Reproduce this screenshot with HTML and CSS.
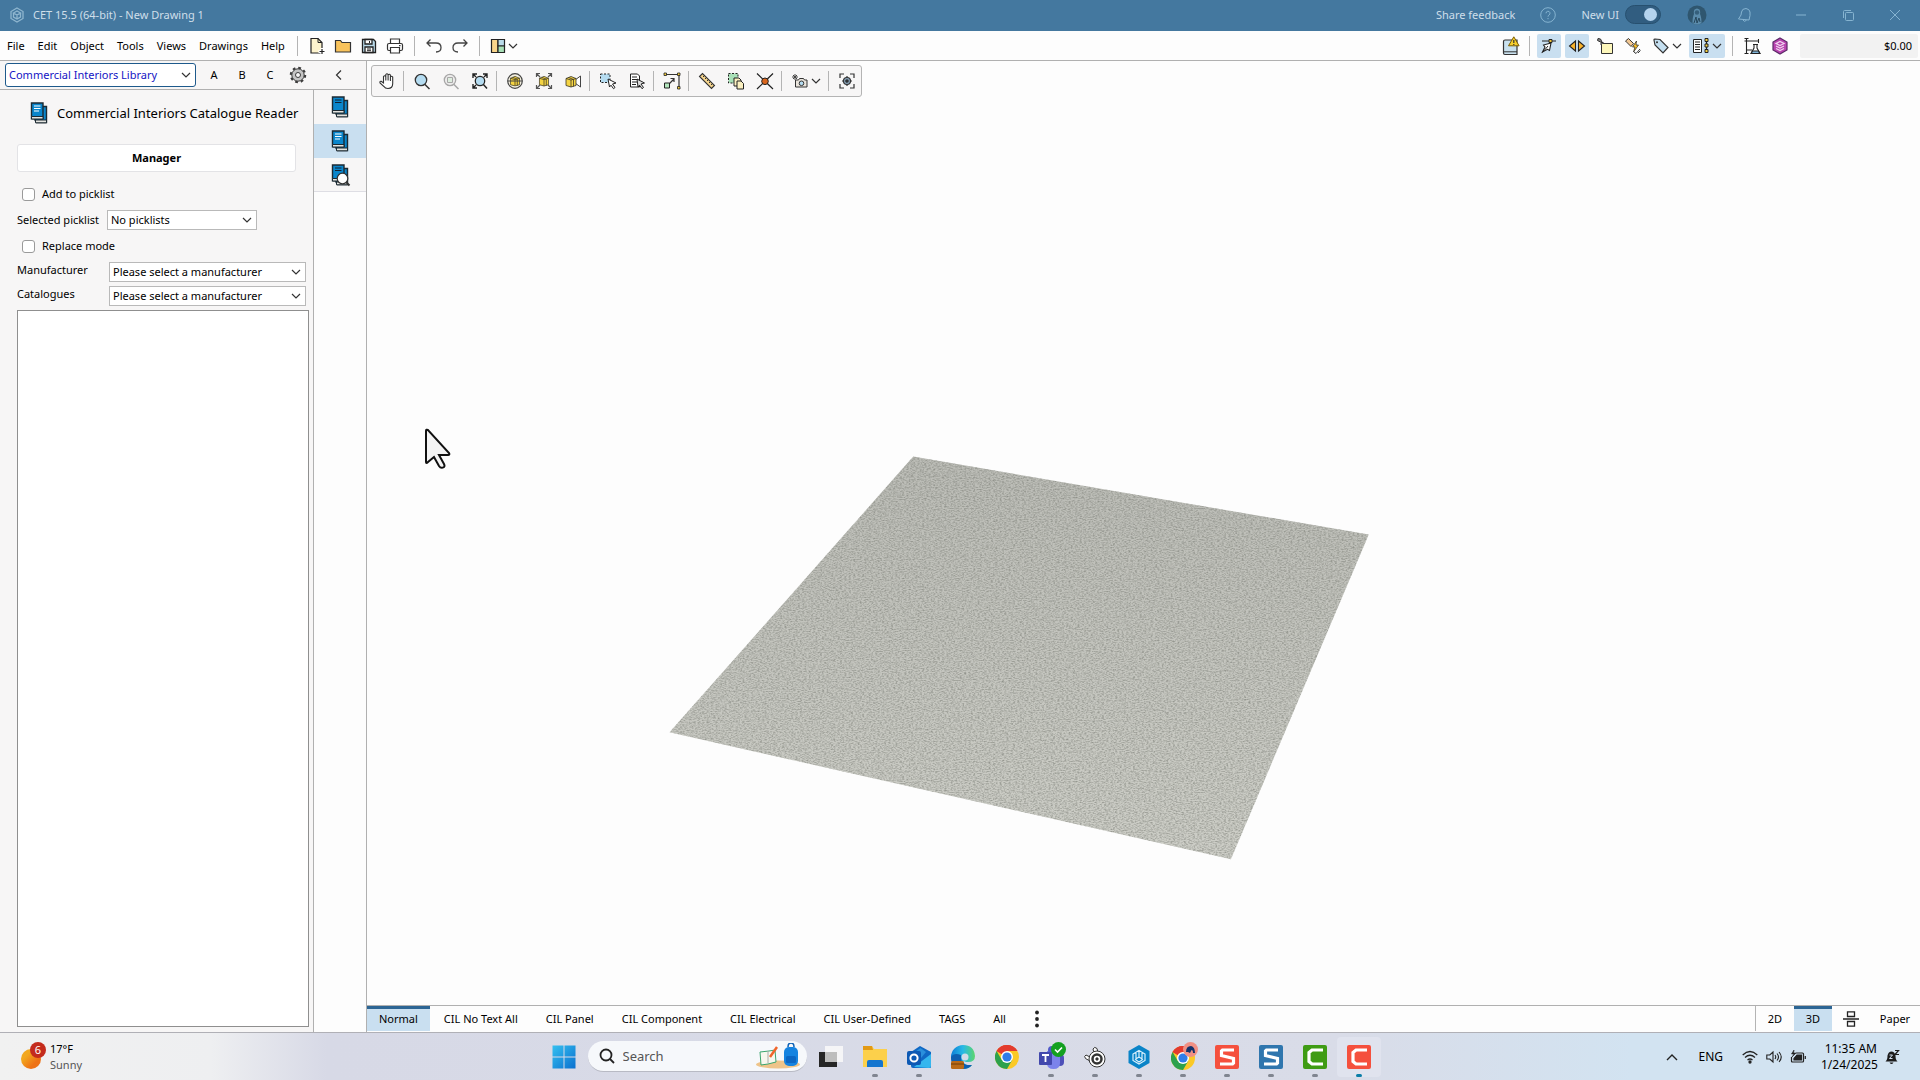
FILE: index.html
```html
<!DOCTYPE html>
<html lang="en">
<head>
<meta charset="utf-8">
<title>CET 15.5 (64-bit) - New Drawing 1</title>
<link rel="stylesheet" href="styles.css">
</head>
<body>
<svg class="defs" width="0" height="0" aria-hidden="true">
  <defs>
    <symbol id="chevron" viewBox="0 0 10 10"><path d="M1 3l4 4 4-4" fill="none" stroke="#333" stroke-width="1.2"/></symbol>
    <symbol id="books" viewBox="0 0 24 24">
      <path d="M8 5.500h11.500v16H9.500L8 19z" fill="#0a86cc" stroke="#1c2a33" stroke-width="1.400"/>
      <path d="M8.500 19h11v2.800h-11z" fill="#e4e4e0" stroke="#1c2a33"/>
      <path d="M4.500 2H16v15.800H4.500z" fill="#0a86cc" stroke="#1c2a33" stroke-width="1.400"/>
      <path d="M4.500 15.500H16V18H4.500z" fill="#e4e4e0" stroke="#1c2a33"/>
    </symbol>
    <symbol id="chrome" viewBox="0 0 24 24">
      <circle cx="12" cy="12" r="12" fill="#fbc926"/>
      <path d="M12 12L1.600 6A12 12 0 0 1 22.400 6H12z" fill="#e33b2e"/>
      <path d="M1.600 6A12 12 0 0 0 12 24l5.200-9L12 12 6.800 15z" fill="#2da14c"/>
      <path d="M1.600 6A12 12 0 0 1 22.400 6H12L6.800 9z" fill="#e33b2e"/>
      <circle cx="12" cy="12" r="6" fill="#fff"/><circle cx="12" cy="12" r="4.600" fill="#2f7de9"/>
    </symbol>
    <symbol id="yellowbox" viewBox="0 0 12 12">
      <path d="M1 3l5-2 5 2v7l-5 1.500L1 10z" fill="#f5d443" stroke="#3a3524" stroke-width=".8"/>
      <path d="M1 3l5 1.500L11 3M6 4.500v7M3.500 2l5 2v7" fill="none" stroke="#3a3524" stroke-width=".8"/>
    </symbol>
    <linearGradient id="floorShade" x1="0" y1="0" x2="0" y2="1"><stop offset="0" stop-color="#bbbcb6"/><stop offset="1" stop-color="#cdcec7"/></linearGradient>
    <linearGradient id="winBlue" x1="0" y1="0" x2="1" y2="1"><stop offset="0" stop-color="#35c0f0"/><stop offset="1" stop-color="#0a70cf"/></linearGradient>
    <linearGradient id="sun" x1="0" y1="0" x2="1" y2="1"><stop offset=".3" stop-color="#f2a71e"/><stop offset=".7" stop-color="#ee7215"/></linearGradient>
    <linearGradient id="edge" x1="0" y1="0" x2="1" y2="0"><stop offset="0" stop-color="#0c7fd6"/><stop offset=".5" stop-color="#29b9e6"/><stop offset="1" stop-color="#5bd66c"/></linearGradient>
    <filter id="carpet" x="0" y="0" width="1" height="1" color-interpolation-filters="sRGB">
      <feTurbulence type="fractalNoise" baseFrequency="0.45 0.900" numOctaves="2" seed="4" result="n"/>
      <feColorMatrix in="n" type="matrix" values="0 0 0 0 .45  0 0 0 0 .46  0 0 0 0 .43  1.200 0 0 0 -.45" result="g"/>
      <feComposite in="g" in2="SourceGraphic" operator="in" result="grain"/>
      <feMerge><feMergeNode in="SourceGraphic"/><feMergeNode in="grain"/></feMerge>
    </filter>
  </defs>
</svg>

<header class="titlebar">
  <svg class="i16" viewBox="0 0 16 16" fill="none" stroke="#8fb6cf" stroke-width="1.300"><path d="M8 1l6 3.500v7L8 15l-6-3.500v-7z"/><path d="M4.500 6L8 4l3.500 2L8 8zM4.500 6v4L8 12l3.500-2V6M8 8v4"/></svg>
  <h1 class="app-title">CET 15.5 (64-bit) - New Drawing 1</h1>
  <div class="title-tools">
    <a class="title-link" href="#feedback">Share feedback</a>
    <button class="title-btn help" aria-label="Help"><svg class="i16" viewBox="0 0 16 16" fill="none" stroke="#86b4d1"><circle cx="8" cy="8" r="7.300"/><path d="M6 6.300a2 2 0 1 1 3 1.700q-1 .7-1 1.700M8 11v1.200"/></svg></button>
    <label class="switch-label">New UI <input class="switch" type="checkbox" role="switch" checked></label>
    <button class="title-btn user" aria-label="Account"><svg class="i20" viewBox="0 0 20 20"><circle cx="10" cy="10" r="9.500" fill="#2f566f"/><path d="M5.500 18q0-6 1.500-9-1-5 3-5.500 4 .5 3 5.500 1.500 3 1.500 9-4.500 3-9 0z" fill="#5a8bab"/><circle cx="10" cy="7.500" r="2.200" fill="#355f7b"/><path d="M7 18l2-6 1 6 2-5 1 4" stroke="#26475c" fill="none"/></svg></button>
    <button class="title-btn bell" aria-label="Notifications"><svg class="i16" viewBox="0 0 16 16" fill="none" stroke="#86b4d1"><path d="M9 1.500q-4 0-4.500 3.500L4 8l-2.500 4 10.500 1 1-4.500L13 5Q12.500 2 9 1.500zM6 13q1 2.500 3.500 .3"/></svg></button>
    <button class="title-btn" aria-label="Minimize"><svg class="i12" viewBox="0 0 12 12"><path d="M1 6h10" stroke="#86b4d1"/></svg></button>
    <button class="title-btn" aria-label="Restore"><svg class="i12" viewBox="0 0 12 12" fill="none" stroke="#86b4d1"><rect x="3.500" y="3.500" width="8" height="8" rx="1"/><path d="M1.500 9V2.500q0-1 1-1H9"/></svg></button>
    <button class="title-btn" aria-label="Close"><svg class="i12" viewBox="0 0 12 12"><path d="M1 1l10 10M11 1L1 11" stroke="#86b4d1"/></svg></button>
  </div>
</header>

<nav class="menubar">
  <div class="menus">
    <button>File</button><button>Edit</button><button>Object</button><button>Tools</button><button>Views</button><button>Drawings</button><button>Help</button>
  </div>
  <div class="quick">
    <span class="sep"></span>
    <button class="tool" aria-label="New"><svg class="i18" viewBox="0 0 18 18"><path d="M3 1.500h7l4 4V16H3z" fill="#fdf3cd" stroke="#222" stroke-width="1.200"/><path d="M10 1.500v4h4" fill="none" stroke="#222"/><path d="M10.500 14.500h7M14 11v7" stroke="#fff" stroke-width="3"/><path d="M11.500 14.500h5M14 12v5" stroke="#222" stroke-width="1.200"/></svg></button>
    <button class="tool" aria-label="Open"><svg class="i18" viewBox="0 0 18 18"><path d="M1.500 3.500h5l1.500 2h8.500V15h-15z" fill="#f8c35c" stroke="#333" stroke-width="1.200"/></svg></button>
    <button class="tool" aria-label="Save"><svg class="i18" viewBox="0 0 18 18" stroke="#222" stroke-width="1.300"><path d="M2.500 2.500h11l2 2v11h-13z" fill="#b9d9e8"/><path d="M5 2.500h7V7H5zM5 10h8v5.500H5z" fill="#fff"/><path d="M9.500 4v2M7 12h4M7 13.700h4" stroke-width="1"/></svg></button>
    <button class="tool" aria-label="Print"><svg class="i18" viewBox="0 0 18 18" stroke="#333" stroke-width="1.200" fill="#fff"><path d="M4.500 2h9v5h-9z"/><rect x="1.500" y="6.500" width="15" height="7" rx="1.500"/><path d="M4.500 10.500h9V16h-9z"/><path d="M13 8.700h1.500" /></svg></button>
    <span class="sep"></span>
    <button class="tool" aria-label="Undo"><svg class="i18" viewBox="0 0 18 18" fill="none" stroke="#444" stroke-width="1.300"><path d="M5.500 2.500L2 6l3.500 3.500M2 6h9q5 0 5 4.500t-5 4.500"/></svg></button>
    <button class="tool" aria-label="Redo"><svg class="i18" viewBox="0 0 18 18" fill="none" stroke="#444" stroke-width="1.300"><path d="M12.500 2.500L16 6l-3.500 3.500M16 6H7q-5 0-5 4.500t5 4.500"/></svg></button>
    <span class="sep"></span>
    <button class="tool wide" aria-label="Layout"><svg class="i16" viewBox="0 0 16 16" stroke="#222" stroke-width="1.200"><path d="M1.500 1.500H8v13H1.500z" fill="#f9d58b"/><path d="M8 1.500h6.500V8H8z" fill="#b9dbe9"/><path d="M8 8h6.500v6.500H8z" fill="#a7dfb6"/></svg><svg class="i10"><use href="#chevron"/></svg></button>
  </div>
  <div class="right-tools">
    <button class="tool" aria-label="Catalogue warnings"><svg class="i20" viewBox="0 0 20 20"><path d="M5 4h12v14.500H5q-1.500 0-1.500-1.500V5.500Q3.500 4 5 4z" fill="#c9e1ef" stroke="#333" stroke-width="1.200"/><path d="M4 15.800h13" stroke="#333"/><path d="M13.800.8l5.300 9H8.500z" fill="#f7cf2d" stroke="#7a5c00"/><path d="M13.800 4v3M13.800 8v1" stroke="#333" stroke-width="1.200"/></svg></button>
    <span class="sep"></span>
    <button class="tool on" aria-label="Snap"><svg class="i18" viewBox="0 0 18 18"><path d="M2 4h14" stroke="#222"/><path d="M2.500 15L5 10l-1.500-2L11 6l-1.500 7.500-2-1.200z" fill="#fff" stroke="#222" stroke-width="1.100"/><path d="M2.500 15.500L8 9" stroke="#222"/><path d="M9 2.500h3v3H9z" fill="#f3c334" stroke="#222"/></svg></button>
    <button class="tool on" aria-label="Direction"><svg class="i18" viewBox="0 0 18 18" fill="#fbb32a" stroke="#222" stroke-width="1.100"><path d="M7.500 4v10L1.500 9zM10.500 4v10l6-5z"/></svg></button>
    <button class="tool" aria-label="Note"><svg class="i18" viewBox="0 0 18 18" stroke="#333"><path d="M5.500 6.500h11v10h-11z" fill="#fdf7bb"/><path d="M5 8V5.500h2.500M4.500 5L1.500 3.500 2 1.500l2.500 .5L6 5z" fill="#888"/></svg></button>
    <button class="tool" aria-label="Quick tools"><svg class="i18" viewBox="0 0 18 18" stroke="#222" stroke-width=".9"><path d="M1.500 4l3-2.500 5 5-2.500 3z" fill="#f2c894"/><path d="M12.500 4L8.500 10H11l-1.500 5 5-7H12z" fill="#fbc02a" stroke-width=".7"/><path d="M10 15l2 1.500 4-4.500M14 16l2.500-2.500" fill="none"/></svg></button>
    <button class="tool wide" aria-label="Tag"><svg class="i18" viewBox="0 0 18 18"><path d="M2 3q0-1 1-1l5 .5 8 8-5 5.500-8-8z" fill="#c4dff0" stroke="#333" stroke-width="1.200"/><circle cx="5" cy="5.300" r="1" fill="#333"/></svg><svg class="i10"><use href="#chevron"/></svg></button>
    <button class="tool wide on" aria-label="List"><svg class="i18" viewBox="0 0 18 18" stroke="#222"><path d="M1.500 2.500h8v13h-8z" fill="#fff"/><path d="M3 5h5M3 7.500h5M3 10h5M3 12.500h5M14.500 3v12" fill="none" stroke-width="1.200"/><path d="M13 1.500h3v3h-3zM13 7h3v3h-3zM13 12.500h3v3h-3z" fill="#f6cf3c"/></svg><svg class="i10"><use href="#chevron"/></svg></button>
    <span class="sep"></span>
    <button class="tool" aria-label="Lab"><svg class="i18" viewBox="0 0 18 18" fill="none" stroke="#222" stroke-width="1.100"><path d="M3.500 1.500v15M1.500 4h14M3 13h6M1.500 1.500h4M15.500 2v4M1.500 16.500h4"/><path d="M10 7.500h5M11 7.500V11l-3 5.500h9L14 11V7.500" fill="#fff"/><path d="M9.500 14h6l1.200 2.500H8.300z" fill="#7fb4d8"/></svg></button>
    <button class="tool" aria-label="Modules"><svg class="i18" viewBox="0 0 18 18"><path d="M9 1l7 4v8l-7 4-7-4V5z" fill="#b944b0" stroke="#5b2a68" stroke-width="1.200"/><path d="M5 6.500L9 4.500l4 2-4 2zM5 9l4 2 4-2M5 11.500l4 2 4-2" fill="none" stroke="#f0d5ef" stroke-width="1.200"/></svg></button>
    <output class="price">$0.00</output>
  </div>
</nav>

<main class="workspace">
  <aside class="side">
    <div class="library-row">
      <div class="combo library"><select aria-label="Library"><option>Commercial Interiors Library</option></select><svg class="i10"><use href="#chevron"/></svg></div>
      <button class="key">A</button><button class="key">B</button><button class="key">C</button>
      <button class="key" aria-label="Settings"><svg class="i18" viewBox="0 0 18 18"><circle cx="9" cy="9" r="7" fill="none" stroke="#3c3c3c" stroke-width="2.500" stroke-dasharray="2.700 2.800"/><circle cx="9" cy="9" r="6.200" fill="#c4c4c4" stroke="#3c3c3c"/><circle cx="9" cy="9" r="2.500" fill="#f7f6f6" stroke="#3c3c3c"/></svg></button>
      <button class="key collapse" aria-label="Collapse"><svg class="i10" viewBox="0 0 10 10"><path d="M7 0.500L2.500 5 7 9.500" fill="none" stroke="#333" stroke-width="1.200"/></svg></button>
    </div>
    <div class="side-body">
      <form class="reader">
        <h2 class="reader-title"><svg class="i24" viewBox="0 0 24 24"><use href="#books"/><path d="M7 5h6.500M7 7.500h6.500M7 10h5" stroke="#fff" stroke-width="1.200"/></svg>Commercial Interiors Catalogue Reader</h2>
        <button class="manager" type="button">Manager</button>
        <label class="check"><input type="checkbox">Add to picklist</label>
        <div class="picklist"><label for="pick">Selected picklist</label><div class="combo"><select id="pick"><option>No picklists</option></select><svg class="i10"><use href="#chevron"/></svg></div></div>
        <label class="check"><input type="checkbox">Replace mode</label>
        <div class="field"><label for="maker">Manufacturer</label><div class="combo"><select id="maker"><option>Please select a manufacturer</option></select><svg class="i10"><use href="#chevron"/></svg></div></div>
        <div class="field"><label for="cat">Catalogues</label><div class="combo"><select id="cat"><option>Please select a manufacturer</option></select><svg class="i10"><use href="#chevron"/></svg></div></div>
        <div class="catalogue-list"></div>
      </form>
      <div class="strip">
        <button aria-label="Catalogue"><svg class="i24" viewBox="0 0 24 24"><use href="#books"/><path d="M7 5h6.500M7 7.500h6.500" stroke="#123" stroke-width="1.200"/></svg></button>
        <button class="on" aria-label="Catalogue reader"><svg class="i24" viewBox="0 0 24 24"><use href="#books"/><path d="M7 5h6.500M7 7.500h6.500M7 10h5" stroke="#fff" stroke-width="1.200"/></svg></button>
        <button aria-label="Catalogue search"><svg class="i24" viewBox="0 0 24 24"><use href="#books"/><path d="M7 5h6.500M7 7.500h6.500" stroke="#123" stroke-width="1.200"/><path d="M18 19l3.500 3.500" stroke="#333" stroke-width="2"/><circle cx="14.500" cy="15.500" r="5.300" fill="#fff" stroke="#333" stroke-width="1.200"/></svg></button>
      </div>
    </div>
  </aside>

  <section class="drawing">
    <div class="viewport">
      <svg class="scene" viewBox="367 61 1553 945" aria-label="3D floor">
        <path d="M913 457L1369 535 1231 860 669 733z" fill="url(#floorShade)" filter="url(#carpet)"/>
      </svg>
      <svg class="cursor" viewBox="0 0 28 42"><path d="M2 3v31q0 2 2 0l6-5 5 9q2 3 5 1 1-1 0-3l-5-9h9q2 0 1-2L4 2Q2 1 2 3z" fill="#f4f4f4" stroke="#111" stroke-width="2"/></svg>
      <div class="viewbar">
        <button aria-label="Pan"><svg class="i18" viewBox="0 0 18 18"><path d="M5.500 11V4.500q1.200-1.500 2.300 0V8.500 2.500q1.200-1.500 2.300 0v6-5.500q1.200-1.500 2.300 0V9 5q1.200-1.500 2.300 0v6.500q0 5-4.700 5-3 0-4-2L2 11q-.5-2 1.200-1.700z" fill="#fff" stroke="#333" stroke-width="1.100"/></svg></button>
        <span class="sep"></span>
        <button aria-label="Zoom"><svg class="i18" viewBox="0 0 18 18"><path d="M11.500 12l5 5" stroke="#333" stroke-width="1.500"/><circle cx="8" cy="8" r="5.700" fill="#b5dcf1" stroke="#333" stroke-width="1.300"/></svg></button>
        <button aria-label="Zoom selection"><svg class="i18" viewBox="0 0 18 18" opacity=".4"><path d="M11.500 12l5 5" stroke="#333" stroke-width="1.500"/><circle cx="8" cy="8" r="5.700" fill="#ddd" stroke="#333" stroke-width="1.300"/><path d="M5.500 5.500h5v5h-5z" fill="#b9e0be" stroke="#333"/></svg></button>
        <button aria-label="Zoom extents"><svg class="i18" viewBox="0 0 18 18" stroke="#222" fill="none"><path d="M2 6V2h4M12 2h4v4M2 12v4h4M2 2l3 3M16 2l-3 3M2 16l3-3" stroke-width="1.400"/><path d="M12 12l4 4.500" stroke-width="1.500"/><circle cx="9" cy="9" r="4.700" fill="#b5dcf1" stroke-width="1.300"/></svg></button>
        <span class="sep"></span>
        <button aria-label="Orbit"><svg class="i18" viewBox="0 0 18 18"><circle cx="9" cy="9" r="7.300" fill="#f4f0e0" stroke="#444" stroke-width="1.200"/><use href="#yellowbox" x="3.500" y="3.500" width="11" height="11"/><path d="M2 9h14" stroke="#444"/></svg></button>
        <button aria-label="Fit objects"><svg class="i18" viewBox="0 0 18 18"><path d="M1.500 5V1.500H5M13 1.500h3.500V5M1.500 13v3.500H5M13 16.500h3.500V13M2 2l3 3M16 2l-3 3M2 16l3-3M16 16l-3-3" fill="none" stroke="#555" stroke-width="1.200"/><use href="#yellowbox" x="3.500" y="3" width="11" height="12"/></svg></button>
        <button aria-label="Camera box"><svg class="i18" viewBox="0 0 18 18"><path d="M11 8l5.500-4v11L11 11" fill="#fff" stroke="#444"/><use href="#yellowbox" x="1" y="3" width="12" height="13"/></svg></button>
        <span class="sep"></span>
        <button aria-label="Area select"><svg class="i18" viewBox="0 0 18 18"><path d="M1.500 2h9.500v8.500H1.500z" fill="#b5dcf1" stroke="#222" stroke-dasharray="2 1.500"/><path d="M9 7l8 4-3.500 1 2.500 3.500-1.500 1.200-2.500-3.500L10.500 15z" fill="#fff" stroke="#222"/></svg></button>
        <button aria-label="List select"><svg class="i18" viewBox="0 0 18 18"><path d="M2.500 2h7l2 2v11h-9z" fill="#fff" stroke="#222"/><path d="M4 5h5M4 7.500h6M4 10h5M4 12.500h4" stroke="#222"/><path d="M9 7l7.500 4-3.500 1 2.500 3.500-1.500 1.200-2.500-3.500L10 15z" fill="#ddd" stroke="#222"/></svg></button>
        <span class="sep"></span>
        <button aria-label="Stretch"><svg class="i18" viewBox="0 0 18 18"><path d="M2 2.500h14V16M6 12l5-5M7.500 6.500H11V10" fill="none" stroke="#333" stroke-width="1.200"/><path d="M1.500 11h5v5h-5z" fill="#b3e6bd" stroke="#222"/><path d="M1 1h2.500v2.500H1zM14.500 1H17v2.500h-2.500zM14.500 14.500H17V17h-2.500z" fill="#f6cf3c" stroke="#222" stroke-width=".8"/></svg></button>
        <span class="sep"></span>
        <button aria-label="Measure"><svg class="i18" viewBox="0 0 18 18"><path d="M1.500 4.500l3-3 12 12-3 3z" fill="#f6d58d" stroke="#333" stroke-width="1.100"/><path d="M6.500 3.500L5 5M8.500 5.500L7 7M10.500 7.500L9 9M12.500 9.500L11 11M14.500 11.500L13 13" stroke="#333"/></svg></button>
        <button aria-label="Copy"><svg class="i18" viewBox="0 0 18 18"><path d="M1.500 1.500H11V11H1.500z" fill="#a8e0b7" stroke="#222" stroke-dasharray="2 1.500"/><path d="M7 6h5l2 2v6H7z" fill="#fbf0c0" stroke="#222"/><path d="M10 9h4l2.500 2.500V17H10z" fill="#fbf0c0" stroke="#222"/></svg></button>
        <button aria-label="Explode"><svg class="i18" viewBox="0 0 18 18"><path d="M1 1.500l16 15.500M17 1.500L1 17" stroke="#222" stroke-width="1.200"/><circle cx="9" cy="9.300" r="3.300" fill="#d9651c" stroke="#222"/></svg></button>
        <span class="sep"></span>
        <button class="camera" aria-label="Render"><svg class="i18" viewBox="0 0 18 18"><path d="M5 2v6M2 5h6M3 3l4 4M7 3L3 7" stroke="#444"/><path d="M5.500 8h3l1-1.500h4l1 1.500H17v7H5.500z" fill="#e9e4dc" stroke="#333"/><circle cx="11.500" cy="11.300" r="2.300" fill="#b5dcf1" stroke="#333"/></svg><svg class="i10"><use href="#chevron"/></svg></button>
        <span class="sep"></span>
        <button aria-label="Focus"><svg class="i18" viewBox="0 0 18 18" fill="none" stroke="#333" stroke-width="1.200"><path d="M2 6V2h4M12 2h4v4M2 12v4h4M12 16h4v-4M9 4v10M4 9h10"/><circle cx="9" cy="9" r="3.500" fill="#8aa6bd"/><circle cx="9" cy="9" r="1.200" fill="#234"/></svg></button>
      </div>
    </div>
    <div class="tabs">
      <button class="on">Normal</button><button>CIL No Text All</button><button>CIL Panel</button><button>CIL Component</button><button>CIL Electrical</button><button>CIL User-Defined</button><button>TAGS</button><button>All</button>
      <button class="more" aria-label="More"><svg class="i18" viewBox="0 0 18 18" fill="#222"><circle cx="9" cy="2.500" r="1.900"/><circle cx="9" cy="9" r="1.900"/><circle cx="9" cy="15.500" r="1.900"/></svg></button>
      <div class="modes">
        <button>2D</button><button class="on">3D</button>
        <button aria-label="Split"><svg class="i16" viewBox="0 0 16 16" fill="none" stroke="#222" stroke-width="1.300"><path d="M0 8h16M4.500.8h7v4.700h-7zM4.500 10.500h7v4.700h-7z"/></svg></button>
        <button class="paper">Paper</button>
      </div>
    </div>
  </section>
</main>

<footer class="taskbar">
  <a class="weather" href="#weather">
    <svg class="i30" viewBox="0 0 30 30"><circle cx="13" cy="17" r="10" fill="url(#sun)"/><circle cx="20" cy="8" r="8" fill="#c42b1c"/><text x="20" y="12" text-anchor="middle" fill="#fff" class="badge">6</text></svg>
    <span>17°F<br><span class="muted">Sunny</span></span>
  </a>
  <div class="apps">
    <button aria-label="Start"><svg class="i24" viewBox="0 0 24 24" fill="url(#winBlue)"><path d="M.5.500h11v11H.5zM12.500.500h11v11h-11zM.5 12.500h11v11H.5zM12.500 12.500h11v11h-11z"/></svg></button>
    <label class="search">
      <svg class="i16" viewBox="0 0 16 16" fill="none" stroke="#222" stroke-width="1.800"><circle cx="7" cy="7" r="5.500"/><path d="M11 11l4 4"/></svg>
      <input type="text" placeholder="Search" aria-label="Search">
      <svg class="promo" viewBox="0 0 46 26"><ellipse cx="23" cy="21.500" rx="22" ry="4" fill="#eec48a"/><path d="M5 9l9-1 6-1 1 12-8 2-7 1z" fill="#f7f7ee" stroke="#3aa56f" stroke-width="1"/><path d="M13 8v12" stroke="#aaa"/><path d="M15 14l7-10" stroke="#f0652b" stroke-width="2.500"/><rect x="29" y="4" width="14" height="19" rx="5" fill="#1583e0"/><path d="M33 4q0-4 3-4t3 4" fill="none" stroke="#0a5fb4" stroke-width="1.500"/><rect x="31" y="13" width="10" height="7" rx="1.500" fill="#0b66c3"/></svg>
    </label>
    <button aria-label="Task view"><svg class="i24" viewBox="0 0 24 24"><path d="M6 1h18v16H6z" fill="#f5f5f7"/><path d="M0 7h18v15H0z" fill="#262626"/><path d="M6 7h12v10H6z" fill="#bdbdbd"/></svg></button>
    <button class="run" aria-label="File Explorer"><svg class="i24" viewBox="0 0 24 24"><path d="M0 1h9l2 3h13v18H0z" fill="#fcd04b"/><path d="M0 1h9l1 4H0z" fill="#e39a14"/><path d="M4 17q0-2 2-2h12q2 0 2 2v5H4z" fill="#1475cf"/></svg></button>
    <button class="run" aria-label="Outlook"><svg class="i24" viewBox="0 0 24 24"><path d="M4 7l9-6 11 6v15q0 1-1 1H6q-2 0-2-2z" fill="#1068c4"/><path d="M7 22L24 9v12q0 2-2 2z" fill="#35b6ee"/><path d="M8 7l5.500-4L19 7l-5 6z" fill="#2a8fdc"/><rect y="6" width="14" height="14" rx="2" fill="#0d59b4"/><circle cx="7" cy="13" r="3.600" fill="none" stroke="#fff" stroke-width="2"/></svg></button>
    <button aria-label="Edge"><svg class="i24" viewBox="0 0 24 24"><path d="M12 0a12 12 0 0 0 0 24q6 0 9-4-8 2-9-5 1 2 5 2 7 0 7-6Q23 0 12 0z" fill="url(#edge)"/><path d="M0 12Q0 24 12 24q6 0 9-4-12 1-11-10Q3 7 0 12z" fill="#0d5fb0"/><circle cx="14" cy="12" r="3.500" fill="#d5dbe8"/><rect y="16" width="13" height="8" rx="1.500" fill="#b96a17"/><path d="M0 19h13" stroke="#6e3c08"/></svg></button>
    <button aria-label="Chrome"><svg class="i24"><use href="#chrome"/></svg></button>
    <button class="run" aria-label="Teams"><svg class="i30" viewBox="0 0 30 30"><rect x="13" y="12" width="15" height="12" rx="4" fill="#4d50b8"/><path d="M11 9h13v12q0 6-6.500 6T11 21z" fill="#7b83eb"/><circle cx="16" cy="8" r="4" fill="#5059c9"/><rect x="3" y="10" width="13" height="13" rx="1" fill="#4248ad"/><path d="M6 13h7M9.500 13v7" stroke="#fff" stroke-width="1.800"/><circle cx="24" cy="7" r="6" fill="none"/><circle cx="22.500" cy="7.500" r="7.500" fill="#13a01f"/><path d="M19 7.500l2.500 2.500 4.500-4.500" fill="none" stroke="#fff" stroke-width="1.600"/></svg></button>
    <button class="run" aria-label="Steering"><svg class="i24" viewBox="0 0 24 24" stroke="#333"><path d="M11 8l-1-4q1.500-3 4-.5l1 4M7 12L3 10q-2.500 1-.5 3.500L7 16" fill="#fff"/><circle cx="14" cy="14" r="8" fill="#fff"/><circle cx="14" cy="14" r="4.500" fill="none" stroke-width="2.500"/><circle cx="14" cy="14" r="1.200" fill="#333"/></svg></button>
    <button class="run" aria-label="CET"><svg class="i24" viewBox="0 0 24 24"><path d="M12 0l10.500 6v12L12 24 1.500 18V6z" fill="#0a84c8"/><path d="M12 5.500l6 3.500v6.500L12 19l-6-3.500V9zM12 5.500V12M12 12l-4 2.500M12 12l4 2.500M9 8v7l3 2 3-2V8" fill="none" stroke="#d8f0fc" stroke-width="1.200"/></svg></button>
    <button class="run" aria-label="Chrome profile"><svg class="i30" viewBox="0 0 30 30"><use href="#chrome" x="3" y="4" width="24" height="24"/><circle cx="22.500" cy="7.500" r="7.500" fill="#f09084"/><path d="M18 10q0-6 5-6 4 1 4 7h-2q0-3-1.500-3L22 11l-2-1z" fill="#12336b"/></svg></button>
    <button class="run" aria-label="Snagit"><svg class="i24" viewBox="0 0 24 24"><rect width="24" height="24" rx="2" fill="#f5503d"/><path d="M19 5H7.500L6.500 6v4.500l12 3V18l-1 1H5" fill="none" stroke="#fff" stroke-width="3.200"/></svg></button>
    <button class="run" aria-label="Snagit Editor"><svg class="i24" viewBox="0 0 24 24"><rect width="24" height="24" rx="2" fill="#2f76ae"/><path d="M19 5H7.500L6.500 6v4.500l12 3V18l-1 1H5" fill="none" stroke="#fff" stroke-width="3.200"/></svg></button>
    <button class="run" aria-label="Camtasia"><svg class="i24" viewBox="0 0 24 24"><rect width="24" height="24" rx="2" fill="#3f9c14"/><path d="M20 5H9L6 7.500v9L9 19h11" fill="none" stroke="#fff" stroke-width="3.200"/></svg></button>
    <button class="run active" aria-label="Camtasia Recorder"><svg class="i24" viewBox="0 0 24 24"><rect width="24" height="24" rx="2" fill="#f5503d"/><path d="M20 5H9L6 7.500v9L9 19h11" fill="none" stroke="#fff" stroke-width="3.200"/></svg></button>
  </div>
  <div class="tray">
    <button aria-label="Hidden icons"><svg class="i12" viewBox="0 0 12 12"><path d="M1 9l5-5 5 5" fill="none" stroke="#222" stroke-width="1.400"/></svg></button>
    <button class="lang">ENG</button>
    <div class="status">
      <svg class="i16" viewBox="0 0 16 16" fill="none" stroke="#222" stroke-width="1.300"><path d="M.7 6Q8-1 15.300 6M3 8.500q5-4.500 10 0M5.500 11Q8 9 10.500 11"/><circle cx="8" cy="13" r="1" fill="#222"/></svg>
      <svg class="i16" viewBox="0 0 16 16" fill="none" stroke="#222" stroke-width="1.100"><path d="M.8 6h3L7 3v10l-3.200-3h-3zM9 6q1.500 2 0 4M11 4.500q3 3.500 0 7M13 3q4.500 5 0 10"/></svg>
      <svg class="i16" viewBox="0 0 16 16" fill="none" stroke="#222" stroke-width="1.200"><path d="M6 4h6.500q1 0 1 1v7q0 1-1 1h-10q-1 0-1-1V8M15.300 7v3"/><path d="M4 11V9.500L7 6h4.500v5z" fill="#222"/><path d="M4 1L1.500 5H4L2 8l4-4H3.500z" fill="#222" stroke-width=".6"/></svg>
    </div>
    <time class="clock" datetime="2025-01-24T11:35">11:35 AM<br>1/24/2025</time>
    <button aria-label="Do not disturb"><svg class="i16" viewBox="0 0 16 16"><path d="M1.500 12.500q2-1.500 2-6 1-4 4-4t4 4q0 4.500 2 6zM5.500 13.500h4q-2 3-4 0z" fill="#1c1c1c"/><path d="M5.500 6h3L5.500 9.500h3" fill="none" stroke="#d0dfee"/><path d="M11 1.500h3.500l-3.500 4h4" fill="none" stroke="#1c1c1c" stroke-width="1.200"/></svg></button>
  </div>
</footer>
</body>
</html>
```
FILE: styles.css
```css
* { box-sizing: border-box; }
body {
  margin: 0;
  height: 100vh;
  display: flex;
  flex-direction: column;
  overflow: hidden;
  background: #fdfdfd;
  color: #000;
  font: 11px/16px "Noto Sans", "Open Sans", sans-serif;
}
button, select, input { font: inherit; color: inherit; }
button {
  display: flex;
  align-items: center;
  justify-content: center;
  flex: none;
  margin: 0;
  padding: 0;
  border: 0;
  background: none;
  white-space: nowrap;
}
a { color: inherit; text-decoration: none; }
h1, h2 { margin: 0; font-weight: 400; }
svg { display: block; flex: none; }
.defs { position: absolute; }
.i10 { width: 10px; height: 10px; }
.i12 { width: 12px; height: 12px; }
.i16 { width: 16px; height: 16px; }
.i18 { width: 18px; height: 18px; }
.i20 { width: 20px; height: 20px; }
.i24 { width: 24px; height: 24px; }
.i30 { width: 30px; height: 30px; }
.sep { flex: none; width: 1px; height: 20px; background: #b4b4b4; }

/* title bar */
.titlebar {
  flex: none;
  display: flex;
  align-items: center;
  gap: 8px;
  height: 31px;
  padding: 0 2px 2px 9px;
  background: #44789f;
  color: #cfdfea;
}
.app-title { font-size: 11px; line-height: 16px; }
.title-tools { display: flex; align-items: center; margin-left: auto; }
.title-btn { width: 47px; height: 29px; }
.title-btn.help { width: 66px; }
.title-btn.user { width: 32px; margin-left: 20px; }
.title-btn.bell { width: 64px; }
.switch-label { display: flex; align-items: center; gap: 6px; }
.switch {
  appearance: none;
  display: flex;
  align-items: center;
  justify-content: flex-end;
  width: 36px;
  height: 19px;
  margin: 0;
  padding-right: 3px;
  border: 1px solid #27506f;
  border-radius: 10px;
  background: #315d80;
}
.switch::before { content: ""; width: 13px; height: 13px; border-radius: 50%; background: #b4d3ee; }

/* menu bar */
.menubar {
  flex: none;
  display: flex;
  align-items: center;
  height: 30px;
  padding-left: 7px;
  border-bottom: 1px solid #b0b0b0;
}
.menus { display: flex; gap: 13px; }
.quick, .right-tools { display: flex; align-items: center; }
.quick { margin-left: 12px; }
.quick .tool { width: 26px; }
.quick .sep { margin: 0 6px; }
.quick .sep:first-child { margin-left: 0; }
.tool { height: 24px; width: 24px; }
.right-tools { margin-left: auto; gap: 4px; padding-right: 2px; }
.right-tools .sep { margin: 0 3px; }
.tool.wide, .quick .tool.wide { width: 36px; gap: 2px; }
.tool.on { background: #c9dff0; border-radius: 2px; }
.price {
  width: 118px;
  margin-left: 4px;
  padding: 4px 6px;
  background: #f2f2f2;
  border-radius: 2px;
  text-align: right;
}

/* side panel */
.workspace { flex: 1; display: flex; min-height: 0; }
.side {
  flex: none;
  display: flex;
  flex-direction: column;
  width: 367px;
  border-right: 1px solid #b0b0b0;
  background: #f7f6f6;
}
.library-row {
  display: flex;
  align-items: center;
  height: 29px;
  padding-left: 5px;
  border-bottom: 1px solid #b0b0b0;
}
.combo { display: grid; align-items: center; grid-template-columns: 1fr 20px; }
.combo select {
  grid-area: 1 / 1 / 2 / 3;
  appearance: none;
  width: 100%;
  height: 20px;
  padding: 0 3px;
  border: 1px solid #b9b9b9;
  border-radius: 0;
  background: #fff;
}
.combo svg { grid-area: 1 / 2; justify-self: center; pointer-events: none; z-index: 1; }
.library { flex: none; width: 191px; margin-right: 4px; }
.library select { height: 24px; border-color: #1e5a8c; border-radius: 3px; color: #1414c4; }
.key { width: 28px; height: 24px; }
.collapse { width: 54px; }
.side-body { flex: 1; display: flex; min-height: 0; }
.reader {
  flex: 1;
  min-width: 0;
  display: flex;
  flex-direction: column;
  margin: 0;
  padding: 11px 4px 5px 17px;
}
.reader-title {
  display: flex;
  align-items: center;
  gap: 6px;
  height: 24px;
  margin-left: 10px;
  font-size: 13px;
  line-height: 20px;
  white-space: nowrap;
}
.manager {
  height: 28px;
  margin: 19px 13px 15px 0;
  border: 1px solid #e3e3e6;
  border-radius: 3px;
  background: #fff;
  font-weight: 700;
}
.check { display: flex; align-items: center; gap: 7px; height: 14px; padding-left: 5px; }
.check input {
  appearance: none;
  width: 13px;
  height: 13px;
  margin: 0;
  border: 1px solid #9a9a9a;
  border-radius: 3px;
  background: #fff;
}
.picklist { display: grid; grid-template-columns: 90px 150px; align-items: center; margin: 9px 0; }
.field { display: grid; grid-template-columns: 92px 197px; margin-bottom: 4px; white-space: nowrap; }
.check + .field { margin-top: 9px; }
.catalogue-list { flex: 1; border: 1px solid #8f8f8f; background: #fff; }
.strip { flex: none; width: 53px; border-left: 1px solid #b0b0b0; background: #fdfdfd; }
.strip button { width: 100%; height: 34px; background: #f7f6f6; }
.strip .on { background: #c9dff0; }
.strip button:last-child { border-bottom: 1px solid #dedee4; }

/* drawing area */
.drawing { flex: 1; display: flex; flex-direction: column; min-width: 0; }
.viewport { flex: 1; position: relative; min-height: 0; }
.scene { position: absolute; inset: 0; width: 100%; height: 100%; }
.cursor { position: absolute; left: 57px; top: 367px; width: 28px; height: 42px; }
.viewbar {
  position: absolute;
  left: 4px;
  top: 4px;
  display: flex;
  align-items: center;
  height: 32px;
  border: 1px solid #b4b4b4;
  border-radius: 3px;
  background: #f7f6f6;
}
.viewbar button { width: 29px; height: 30px; }
.viewbar .camera { width: 41px; gap: 3px; }
.viewbar .sep { margin: 0 3px 0 2px; }
.tabs {
  flex: none;
  display: flex;
  height: 27px;
  padding-bottom: 1px;
  border-top: 1px solid #b0b0b0;
}
.tabs button { padding: 0 14px; }
.tabs .on { background: #c9dff0; border-top: 3px solid #2c6594; padding: 0 12px 3px; }
.tabs .more { padding: 0 8px; }
.modes { display: flex; margin-left: auto; border-left: 1px solid #b4b4b4; }
.modes button { width: 38px; padding: 0; }
.modes .on { padding: 0 0 3px; }
.modes .paper { width: 50px; }

/* taskbar */
.taskbar {
  flex: none;
  display: grid;
  grid-template-columns: 1fr auto 1fr;
  align-items: center;
  height: 48px;
  border-top: 1px solid #b0b0b6;
  background: linear-gradient(90deg, #f1f1f1 0, #eeeff1 11%, #d7d9e6 17%, #d9dce8 70%, #d2e3f1 85%, #d2e3f1 100%);
}
.weather { display: flex; align-items: center; gap: 2px; padding-left: 18px; }
.badge { font-size: 11px; }
.muted { color: #555; }
.apps { display: flex; align-items: center; padding-left: 4px; }
.apps button { position: relative; width: 44px; height: 40px; }
.apps button:first-child { width: 40px; }
.run::after {
  content: "";
  position: absolute;
  bottom: 0;
  left: 19px;
  width: 6px;
  height: 3px;
  border-radius: 2px;
  background: #808590;
}
.active { border-radius: 4px; background: #e0e3ee; }
.active::after { background: #0a7ea8; }
.search {
  display: flex;
  align-items: center;
  width: 219px;
  height: 31px;
  margin: 0 2px 0 4px;
  padding: 0 6px 0 11px;
  border-bottom: 1px solid #b8bac4;
  border-radius: 16px;
  background: #f6f8fb;
}
.search input { flex: 1; min-width: 0; padding: 0 8px; border: 0; background: none; font-size: 13px; }
.search input::placeholder { color: #555; opacity: 1; }
.promo { width: 46px; height: 26px; }
.tray { display: flex; align-items: center; justify-content: flex-end; padding-right: 20px; font-size: 12px; }
.tray button { height: 32px; }
.lang { margin: 0 19px 0 20px; }
.status { display: flex; gap: 8px; margin-right: 15px; }
.clock { width: 56px; margin-right: 7px; text-align: right; white-space: nowrap; }
```
